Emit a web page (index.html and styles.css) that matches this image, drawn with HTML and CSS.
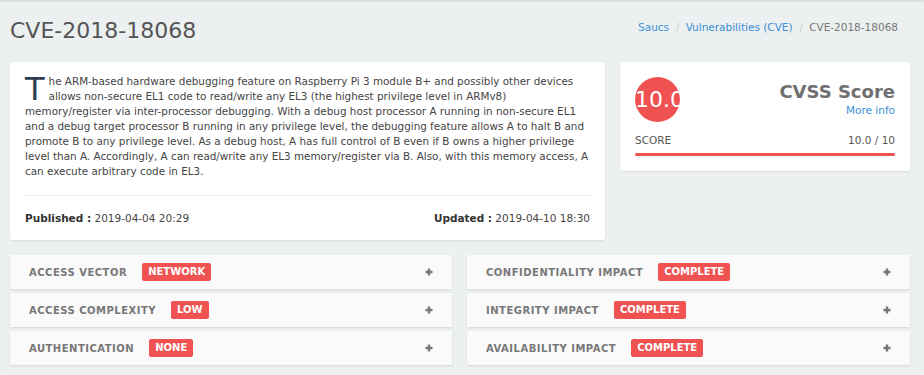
FILE: index.html
```html
<!DOCTYPE html>
<html lang="en">
<head>
    <meta charset="UTF-8">
    <meta name="viewport" content="width=device-width, initial-scale=1.0">
    <title>CVE-2018-18068</title>
    <link rel="stylesheet" href="styles.css">
</head>
<body>
    <div class="page">
        <div class="page-header">
            <h1>CVE-2018-18068</h1>
            <ol class="breadcrumb">
                <li><a href="#">Saucs</a></li>
                <li><a href="#">Vulnerabilities (CVE)</a></li>
                <li class="active">CVE-2018-18068</li>
            </ol>
        </div>

        <div class="top-row">
            <div class="card summary">
                <p class="description"><span class="dropcap">T</span>he ARM-based hardware debugging feature on Raspberry Pi 3 module B+ and possibly other devices allows non-secure EL1 code to read/write any EL3 (the highest privilege level in ARMv8) memory/register via inter-processor debugging. With a debug host processor A running in non-secure EL1 and a debug target processor B running in any privilege level, the debugging feature allows A to halt B and promote B to any privilege level. As a debug host, A has full control of B even if B owns a higher privilege level than A. Accordingly, A can read/write any EL3 memory/register via B. Also, with this memory access, A can execute arbitrary code in EL3.</p>
                <div class="dates">
                    <span><b>Published :</b> 2019-04-04 20:29</span>
                    <span><b>Updated :</b> 2019-04-10 18:30</span>
                </div>
            </div>

            <div class="card score-card">
                <div class="score-head">
                    <div class="score-circle">10.0</div>
                    <div class="score-title">
                        <h2>CVSS Score</h2>
                        <a href="#">More info</a>
                    </div>
                </div>
                <div class="score-line">
                    <span>SCORE</span>
                    <span>10.0 / 10</span>
                </div>
                <div class="score-bar"><div class="score-fill" style="width: 100%"></div></div>
            </div>
        </div>

        <div class="metrics">
            <div class="metric"><span class="metric-name">Access Vector</span><span class="badge">Network</span><svg class="plus" viewBox="0 0 8 8"><path d="M4 0.5V7.5M0.5 4H7.5"/></svg></div>
            <div class="metric"><span class="metric-name">Confidentiality Impact</span><span class="badge">Complete</span><svg class="plus" viewBox="0 0 8 8"><path d="M4 0.5V7.5M0.5 4H7.5"/></svg></div>
            <div class="metric"><span class="metric-name">Access Complexity</span><span class="badge">Low</span><svg class="plus" viewBox="0 0 8 8"><path d="M4 0.5V7.5M0.5 4H7.5"/></svg></div>
            <div class="metric"><span class="metric-name">Integrity Impact</span><span class="badge">Complete</span><svg class="plus" viewBox="0 0 8 8"><path d="M4 0.5V7.5M0.5 4H7.5"/></svg></div>
            <div class="metric"><span class="metric-name">Authentication</span><span class="badge">None</span><svg class="plus" viewBox="0 0 8 8"><path d="M4 0.5V7.5M0.5 4H7.5"/></svg></div>
            <div class="metric"><span class="metric-name">Availability Impact</span><span class="badge">Complete</span><svg class="plus" viewBox="0 0 8 8"><path d="M4 0.5V7.5M0.5 4H7.5"/></svg></div>
        </div>
    </div>
</body>
</html>
```

FILE: styles.css
```css
html, body { margin: 0; padding: 0; }
body { font-family: "DejaVu Sans", Verdana, sans-serif; font-size: 10.5px; color: #555; background-color: #ecf0f1; box-shadow: inset 0 3px 3px -2px rgba(0, 0, 0, 0.12); min-height: 375px; }
a { color: #3a8fd6; text-decoration: none; }
.page { padding: 0 14px 0 10px; }
.page-header { display: flex; justify-content: space-between; align-items: flex-start; height: 62px; }
.page-header h1 { margin: 16px 0 0; font-size: 22px; font-weight: normal; color: #555; line-height: 30px; }
.breadcrumb { display: flex; list-style: none; margin: 20px 12px 0 0; padding: 0; line-height: 14px; }
.breadcrumb li + li::before { content: "/"; color: #ccc; padding: 0 6px 0 7px; }
.breadcrumb .active { color: #777; }
.top-row { display: flex; gap: 15px; align-items: flex-start; }
.card { background: #fff; border-radius: 3px; box-shadow: 0 1px 2px rgba(0, 0, 0, 0.08); }
.summary { width: 565px; padding: 12px 15px 15px; }
.description { margin: 0; font-size: 10.4px; line-height: 15px; color: #444; padding-bottom: 16px; border-bottom: 1px solid #eee; }
.dropcap { float: left; font-size: 32px; line-height: 30px; height: 30px; padding-right: 4px; color: #2c3e50; }
.dates { display: flex; justify-content: space-between; padding-top: 15px; line-height: 14px; color: #444; }
.dates b { color: #333; }
.score-card { width: 260px; padding: 15px; }
.score-head { display: flex; justify-content: space-between; align-items: flex-start; }
.score-circle { width: 45px; height: 45px; border-radius: 50%; background: #f05252; color: #fff; font-size: 22px; line-height: 45px; overflow: hidden; white-space: nowrap; }
.score-title { text-align: right; padding-top: 4px; }
.score-title h2 { margin: 0; font-size: 18px; color: #707070; line-height: 22px; }
.score-title a { display: block; margin-top: 1px; }
.score-line { display: flex; justify-content: space-between; margin-top: 12px; color: #555; }
.score-bar { margin-top: 7px; height: 3px; background: #eee; border-radius: 2px; }
.score-fill { height: 3px; background: #f05252; border-radius: 2px; }
.metrics { display: grid; grid-template-columns: 442px 443px; column-gap: 15px; row-gap: 4px; margin-top: 15px; }
.metric { display: flex; align-items: center; height: 34px; padding: 0 19px; background: #fafafa; box-shadow: 0 1px 2px rgba(0, 0, 0, 0.1); }
.metric-name { font-size: 10px; font-weight: bold; text-transform: uppercase; letter-spacing: 0.5px; color: #777; margin-right: 15px; }
.badge { font-size: 10px; background: #f05252; color: #fff; font-weight: bold; text-transform: uppercase; padding: 2px 6px; border-radius: 2px; line-height: 14px; }
.plus { margin-left: auto; width: 8px; height: 8px; fill: none; stroke: #777; stroke-width: 2.4; }
```
